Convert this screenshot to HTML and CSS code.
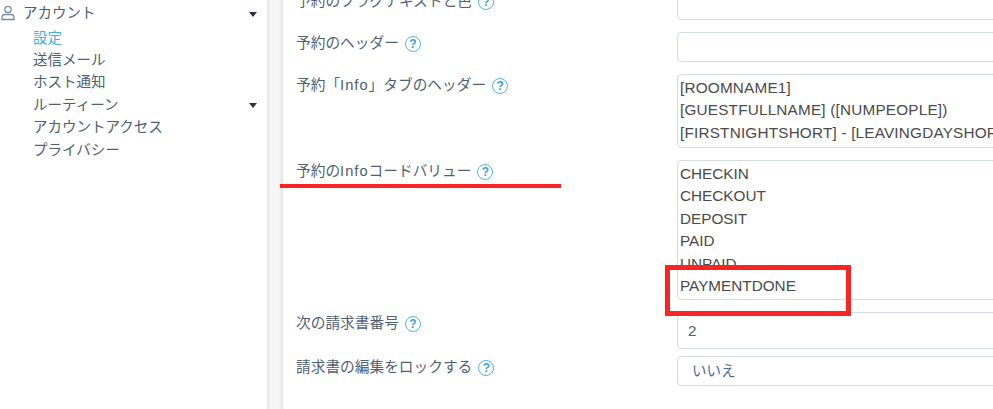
FILE: index.html
```html
<!DOCTYPE html>
<html lang="ja">
<head>
  <meta charset="UTF-8" />
  <title>アカウント設定</title>
  <link rel="stylesheet" href="styles.css">
</head>
<body>

<div class="app">
  <nav class="sidebar">
    <div class="nav-head">
      <svg class="user-icon" width="14" height="16" viewBox="0 0 14 16" fill="none" stroke="#7d8b99" stroke-width="1.3">
        <circle cx="7" cy="4.500" r="3.200"/>
        <path d="M1 14.500v-2.200c0-1.600 1.400-2.800 3-2.800h6c1.600 0 3 1.200 3 2.800v2.200z"/>
      </svg>
      <span>アカウント</span>
      <i class="caret"></i>
    </div>
    <ul class="nav-list">
      <li class="active">設定</li>
      <li>送信メール</li>
      <li>ホスト通知</li>
      <li>ルーティーン<i class="caret"></i></li>
      <li>アカウントアクセス</li>
      <li>プライバシー</li>
    </ul>
  </nav>

  <div class="gutter"></div>

  <main class="content">
    <div class="row">
      <label>予約のフラグテキストと色 <span class="help">?</span></label>
      <input class="field h-30" type="text">
    </div>
    <div class="row">
      <label>予約のヘッダー <span class="help">?</span></label>
      <input class="field h-30" type="text">
    </div>
    <div class="row">
      <label>予約「<span class="latin">Info</span>」タブのヘッダー <span class="help">?</span></label>
      <textarea class="field area wide h-74">[ROOMNAME1]
[GUESTFULLNAME] ([NUMPEOPLE])
[FIRSTNIGHTSHORT] - [LEAVINGDAYSHORT]</textarea>
    </div>
    <div class="row">
      <label>予約の<span class="latin">Info</span>コードバリュー <span class="help">?</span></label>
      <textarea class="field area h-140">CHECKIN
CHECKOUT
DEPOSIT
PAID
UNPAID
PAYMENTDONE</textarea>
    </div>
    <div class="row">
      <label>次の請求書番号 <span class="help">?</span></label>
      <input class="field number" type="text" value="2">
    </div>
    <div class="row tight">
      <label>請求書の編集をロックする <span class="help">?</span></label>
      <select class="field choice">
        <option>いいえ</option>
      </select>
    </div>
  </main>
</div>

<!-- annotations drawn on top of the screenshot -->
<div class="mark-line"></div>
<div class="mark-box"></div>

</body>
</html>
```

FILE: styles.css
```css
html, body {
  margin: 0;
  padding: 0;
  height: 409px;
  overflow: hidden;
  background: white;
}

body {
  position: relative;
  font-family: "Liberation Sans", "Noto Sans CJK JP", sans-serif;
  font-size: 14.5px;
  color: #4f5f72;
}

.app {
  display: flex;
  height: 409px;
}

.sidebar {
  width: 267px;
  flex: none;
  box-sizing: border-box;
}

.nav-head {
  display: flex;
  align-items: center;
  height: 22px;
  padding-right: 10px;
  margin-top: 1px;
}

.user-icon {
  margin-left: 1px;
  margin-top: 1px;
  flex: none;
}

.nav-head span {
  margin-left: 8px;
  margin-top: -2px;
  flex: 1;
}

.caret {
  width: 0;
  height: 0;
  margin-top: 5px;
  border-left: 4.500px solid transparent;
  border-right: 4.500px solid transparent;
  border-top: 5px solid #2b3440;
}

.nav-list {
  list-style: none;
  margin: 2px 0 0;
  padding: 0 10px 0 33px;
}

.nav-list li {
  display: flex;
  justify-content: space-between;
  align-items: center;
  height: 22.4px;
}

.nav-list .active {
  color: #45afe3;
}

.gutter {
  width: 16px;
  flex: none;
  background: linear-gradient(to right, #e6e6e6, #f6f6f6 25%, #f6f6f6 75%, #e2e2e2);
}

.content {
  flex: 1;
  min-width: 0;
  margin-top: -10px;
  padding-left: 13px;
  background: white;
}

.row {
  display: flex;
  align-items: flex-start;
  margin-bottom: 12px;
}

.row.tight {
  margin-top: -5px;
}

.row label {
  flex: none;
  width: 381px;
  font-size: 14.7px;
  line-height: 22px;
}

.latin {
  letter-spacing: 1px;
}

.help {
  display: inline-block;
  width: 14px;
  height: 14px;
  margin-left: 2px;
  border: 1.500px solid #4fb3e8;
  border-radius: 50%;
  color: #3a9fd8;
  font-size: 12px;
  font-weight: bold;
  line-height: 14px;
  text-align: center;
}

.field {
  display: block;
  flex: none;
  width: 500px;
  box-sizing: border-box;
  margin: 0;
  border: 1px solid #d3dbe3;
  border-radius: 4px;
  background: white;
  font-family: "Liberation Sans", "Noto Sans CJK JP", sans-serif;
  font-size: 15.3px;
  color: #4a4a4a;
  outline: none;
}

.h-30 {
  height: 30px;
}

.area {
  padding: 2px 2px;
  line-height: 22.4px;
  white-space: pre;
  overflow: hidden;
  resize: none;
}

.wide {
  letter-spacing: 0.2px;
}

.h-74 {
  height: 74px;
}

.h-140 {
  height: 140px;
}

.number {
  height: 37px;
  padding: 0 10px;
  color: #5b5f66;
}

.choice {
  height: 30px;
  padding: 0 14px;
  appearance: none;
  font-size: 14.5px;
  color: #4f6d8f;
}

/* red markup */
.mark-line {
  position: absolute;
  left: 280px;
  top: 184px;
  width: 281px;
  height: 4px;
  background: #fb2424;
}

.mark-box {
  position: absolute;
  left: 665px;
  top: 265px;
  width: 176px;
  height: 41px;
  border: 5px solid #fb2424;
}
```
